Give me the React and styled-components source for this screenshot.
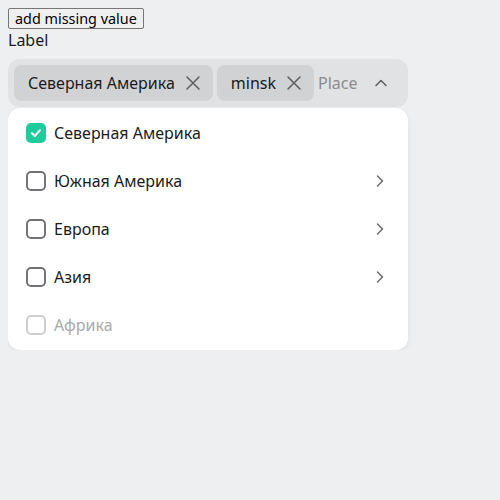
import React from "react";
import styled, { createGlobalStyle } from "styled-components";

const Global = createGlobalStyle`
  html, body { background: #eeeff1; }
  body {
    margin: 8px;
    font-family: "Noto Sans", "Open Sans", sans-serif;
    color: #1b1b1c;
  }
`;

const AddButton = styled.button`
  display: block;
  box-sizing: border-box;
  height: 21px;
  font-family: "Noto Sans", sans-serif;
  font-size: 14.4px;
  line-height: 17px;
  padding: 0 6px;
  border: 1px solid #767676;
  border-radius: 2px;
  background: #efefef;
  color: #000;
`;

const Label = styled.div`
  font-size: 16px;
  line-height: 22px;
`;

const Field = styled.div`
  width: 400px;
  margin-top: 8px;
`;

const Control = styled.div`
  box-sizing: border-box;
  height: 48px;
  padding: 6px 19px 6px 6px;
  border-radius: 12px;
  background: #e1e2e4;
  display: flex;
  align-items: center;
  gap: 4px;
`;

const Chip = styled.div`
  box-sizing: border-box;
  height: 36px;
  display: flex;
  align-items: center;
  gap: 10px;
  padding: 0 12px 0 14px;
  border-radius: 8px;
  background: #d1d2d4;
  font-size: 16px;
  color: #1b1b1c;
  white-space: nowrap;
`;

const Placeholder = styled.span`
  flex: 1;
  font-size: 16px;
  color: #8b8c8e;
`;

const IconBox = styled.span`
  display: inline-flex;
  width: 16px;
  height: 16px;
  color: ${(p) => p.$color || "#5c5d60"};
`;

const Menu = styled.div`
  margin-top: 1px;
  box-sizing: border-box;
  padding: 1px 0;
  background: #fff;
  border-radius: 12px;
  box-shadow: 0 2px 6px rgba(0, 0, 0, 0.06), 0 0 1px rgba(0, 0, 0, 0.06);
`;

const Item = styled.div`
  height: 48px;
  display: flex;
  align-items: center;
  gap: 8px;
  padding: 0 20px 0 18px;
  font-size: 16px;
  color: ${(p) => (p.$disabled ? "#a9aaac" : "#1b1b1c")};
`;

const ItemText = styled.span`
  flex: 1;
`;

const Box = styled.span`
  box-sizing: border-box;
  width: 20px;
  height: 20px;
  border-radius: 5px;
  display: inline-flex;
  align-items: center;
  justify-content: center;
  background: ${(p) => (p.$checked ? "#1fcb9c" : "transparent")};
  border: ${(p) =>
    p.$checked ? "none" : `2px solid ${p.$disabled ? "#cdced0" : "#727376"}`};
`;

const XIcon = () => (
  <IconBox>
    <svg width="16" height="16" viewBox="0 0 16 16" fill="none">
      <path d="M2 2 L14 14 M14 2 L2 14" stroke="currentColor" strokeWidth="1.5" strokeLinecap="round" />
    </svg>
  </IconBox>
);

const ChevronUp = () => (
  <IconBox>
    <svg width="16" height="16" viewBox="0 0 16 16" fill="none">
      <path d="M3 10.5 L8 5.5 L13 10.5" stroke="currentColor" strokeWidth="1.5" strokeLinecap="round" strokeLinejoin="round" />
    </svg>
  </IconBox>
);

const ChevronRight = () => (
  <IconBox $color="#6b6c6f">
    <svg width="16" height="16" viewBox="0 0 16 16" fill="none">
      <path d="M5.5 3 L10.5 8 L5.5 13" stroke="currentColor" strokeWidth="1.5" strokeLinecap="round" strokeLinejoin="round" />
    </svg>
  </IconBox>
);

const Check = () => (
  <svg width="14" height="14" viewBox="0 0 14 14" fill="none">
    <path d="M3 7.2 L5.8 10 L11 4.2" stroke="#fff" strokeWidth="2" strokeLinecap="round" strokeLinejoin="round" />
  </svg>
);

const items = [
  { label: "Северная Америка", checked: true },
  { label: "Южная Америка", arrow: true },
  { label: "Европа", arrow: true },
  { label: "Азия", arrow: true },
  { label: "Африка", disabled: true },
];

export default function App() {
  return (
    <>
      <Global />
      <AddButton>add missing value</AddButton>
      <Label>Label</Label>
      <Field>
        <Control>
          <Chip>
            Северная Америка
            <XIcon />
          </Chip>
          <Chip>
            minsk
            <XIcon />
          </Chip>
          <Placeholder>Place</Placeholder>
          <ChevronUp />
        </Control>
        <Menu>
          {items.map((it) => (
            <Item key={it.label} $disabled={it.disabled}>
              <Box $checked={it.checked} $disabled={it.disabled}>
                {it.checked && <Check />}
              </Box>
              <ItemText>{it.label}</ItemText>
              {it.arrow && <ChevronRight />}
            </Item>
          ))}
        </Menu>
      </Field>
    </>
  );
}
